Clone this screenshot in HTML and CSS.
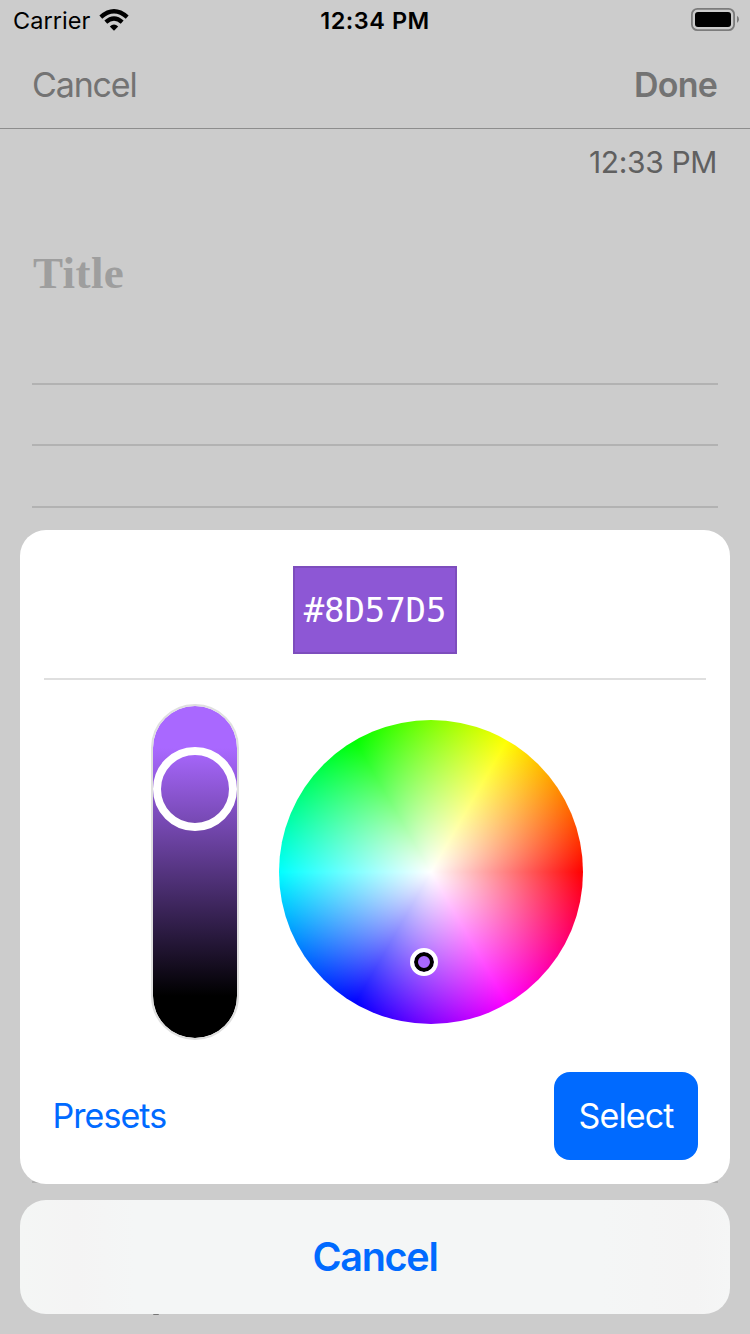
FILE: index.html
```html
<!DOCTYPE html>
<html lang="en">
<head>
<meta charset="utf-8">
<title>Color picker</title>
<link rel="stylesheet" href="styles.css">
</head>
<body>
<div class="screen">
  <div class="status">
    <div class="carrier"><span class="carrier-name">Carrier</span>
      <svg class="wifi" width="30" height="22" viewBox="0 0 30 22"><path d="M15 21.8 10.8 17.5Q15 13.3 19.2 17.5Z"/><path d="M1.8 8.1Q15-3.5 28.2 8.1M6.8 13.2Q15 5.8 23.2 13.2" fill="none" stroke="#000" stroke-width="4.3"/></svg>
    </div>
    <span class="clock">12:34 PM</span>
    <svg class="battery" width="50" height="24" viewBox="0 0 50 24"><rect x="1.9" y="1.9" width="42.2" height="21.2" rx="5.5" fill="none" stroke="#7c7c7c" stroke-width="1.8"/><rect x="5" y="5" width="36" height="15" rx="3"/><path d="M47 8.8Q49 9.8 49 12.3T47 16Z" fill="#7c7c7c"/></svg>
  </div>
  <nav class="nav"><span class="nav-cancel">Cancel</span><span class="nav-done">Done</span></nav>
  <main class="note">
    <div class="note-time"><span>12:33 PM</span></div>
    <div class="note-title"><span>Title</span></div>
    <div class="lines"></div>
    <div class="footer-mark"></div>
  </main>
  <div class="overlay">
    <section class="sheet">
      <div class="swatch"><span>#8D57D5</span></div>
      <div class="divider"></div>
      <div class="controls">
        <div class="slider"><div class="thumb"></div></div>
        <div class="wheel"><div class="pin"></div></div>
      </div>
      <div class="actions"><span class="presets">Presets</span><button class="select"><span>Select</span></button></div>
    </section>
    <button class="cancel"><span>Cancel</span></button>
  </div>
</div>
</body>
</html>
```
FILE: styles.css
```css
* { box-sizing: border-box; }
body { margin: 0; font-family: Inter, "Liberation Sans", sans-serif; }
button { border: 0; padding: 0; font-family: inherit; }
.screen { position: relative; display: flex; flex-direction: column; width: 750px; height: 1334px; overflow: hidden; background: #ccc; }
.status { display: grid; grid-template-columns: 1fr auto 1fr; align-items: start; height: 40px; padding: 7px 10px 0 13px; line-height: 28px; }
.carrier { display: flex; gap: 9px; margin-right: 3px; font-size: 23.5px; letter-spacing: .05px; }
.wifi { margin-top: 2px; }
.clock { margin-left: -3px; font-size: 23.5px; font-weight: 600; letter-spacing: .5px; }
.battery { justify-self: end; }
.nav { display: flex; justify-content: space-between; height: 89px; padding: 0 32px; border-bottom: 1px solid #8d8d8d; font-size: 34px; line-height: 89px; color: #737373; }
.nav-cancel { letter-spacing: -1.15px; }
.nav-done { padding-right: 1px; font-weight: 600; letter-spacing: -.8px; }
.note { display: flex; flex-direction: column; flex: 1; padding: 0 32px; }
.note-time { height: 68px; padding-right: 1px; font-size: 30px; line-height: 67px; text-align: right; color: #606060; letter-spacing: -.35px; }
.note-title { height: 186px; padding: 51px 0 0 1px; font: bold 45px/50px "Liberation Serif", serif; letter-spacing: .4px; color: #9e9e9e; }
.lines { height: 800px; background: repeating-linear-gradient(#b2b2b2 0 2px, transparent 2px 61.4px); }
.footer-mark { width: 6px; height: 1px; margin: 131px 0 0 121px; background: #777; border-radius: 0 0 3px 3px; }
.overlay { position: absolute; inset: 0; display: flex; flex-direction: column; justify-content: flex-end; gap: 16px; padding: 20px; }
.sheet { display: flex; flex-direction: column; height: 654px; padding: 36px 24px 24px; border-radius: 26px; background: #fff; }
.swatch { align-self: center; width: 164px; height: 88px; border: 2px solid #7d4dbd; background: #8d57d5; color: #fff; font: 34px/84px "DejaVu Sans Mono", monospace; text-align: center; letter-spacing: -.1px; }
.divider { height: 2px; margin-top: 24px; background: #dfdfdf; }
.controls { display: flex; align-items: center; gap: 40px; margin-top: 24px; padding-left: 107px; }
.slider { width: 88px; height: 336px; padding-top: 41px; border: 2px solid #dfdfdf; border-radius: 44px; background: linear-gradient(#a968ff 42px, #000 290px) padding-box; }
.thumb { width: 84px; height: 84px; border: 8px solid #fff; border-radius: 50%; }
.wheel { width: 304px; height: 304px; padding: 227.5px 0 0 131px; border-radius: 50%; background: radial-gradient(circle closest-side, #fff, rgba(255,255,255,0)), conic-gradient(from 90deg, #f00, #f0f, #00f, #0ff, #0f0, #ff0, #f00); }
.pin { width: 28px; height: 28px; border: 4px solid #fff; border-radius: 50%; background: #a968ff; box-shadow: inset 0 0 0 4px #000; }
.actions { display: flex; justify-content: space-between; margin-top: 32px; padding: 0 8px; font-size: 34px; line-height: 88px; }
.presets { padding-left: .5px; color: #006aff; letter-spacing: -.95px; }
.select { width: 144px; height: 88px; border-radius: 16px; background: #006aff; color: #fff; font-size: 34px; line-height: 86px; letter-spacing: -.9px; }
.cancel { flex: none; height: 114px; border-radius: 26px; background: linear-gradient(90deg, #f4f6f5, #f4f4f4 8%, #f4f6f6 16%, #f4f6f6 82%, #f4f4f4 95%, #f5f6f6); color: #006aff; font-size: 39.5px; font-weight: 600; letter-spacing: -1.3px; line-height: 113px; }
```
